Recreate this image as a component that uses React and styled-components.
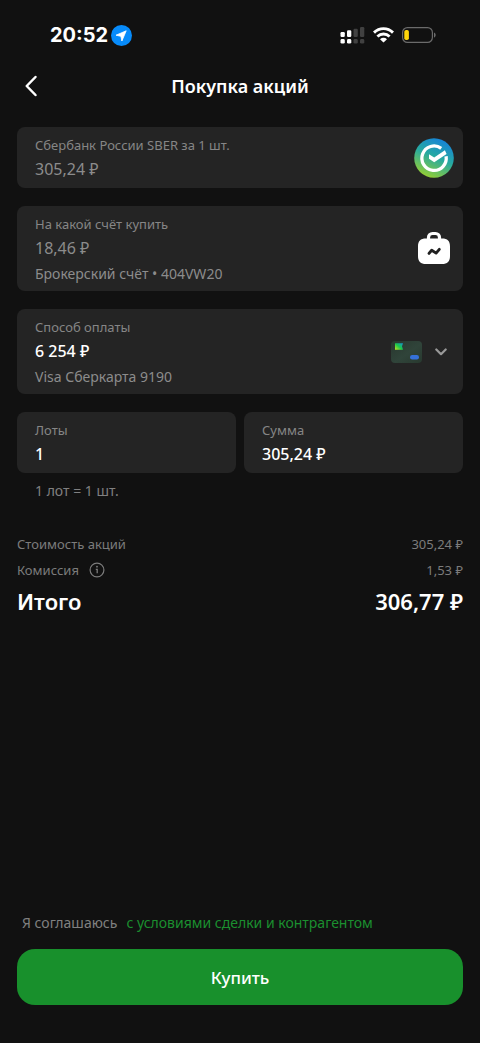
import React, { useState } from 'react';
import styled, { createGlobalStyle } from 'styled-components';

const GlobalStyle = createGlobalStyle`
  *, *::before, *::after { box-sizing: border-box; }
  body {
    margin: 0;
    background: #111111;
    color: #ffffff;
    font-family: "Noto Sans", "Liberation Sans", sans-serif;
  }
  button, input { font: inherit; color: inherit; }
`;

const Screen = styled.div`
  display: flex;
  flex-direction: column;
  min-height: 100vh;
`;

const StatusBar = styled.div`
  display: flex;
  align-items: center;
  justify-content: space-between;
  height: 70px;
  padding: 0 44px 0 50px;
`;

const StatusGroup = styled.div`
  display: flex;
  align-items: center;
  gap: ${({ $gap }) => $gap}px;
`;

const Clock = styled.time`
  font: 700 20px/24px Inter, sans-serif;
`;

const Header = styled.header`
  display: grid;
  grid-template-columns: 44px 1fr 44px;
  align-items: center;
  height: 31px;
  padding: 0 9px;
`;

const Title = styled.h1`
  margin: 0;
  font-size: 18px;
  line-height: 24px;
  font-weight: 600;
  text-align: center;
`;

const IconButton = styled.button`
  display: inline-flex;
  align-items: center;
  justify-content: center;
  padding: 0;
  border: 0;
  background: none;
  color: inherit;
  cursor: pointer;
`;

const Form = styled.form`
  display: flex;
  flex: 1;
  flex-direction: column;
  padding: 26px 17px 38px;
`;

const Fields = styled.div`
  display: flex;
  flex-direction: column;
  gap: 18px;
`;

const Card = styled.div`
  display: flex;
  align-items: center;
  justify-content: space-between;
  width: 100%;
  padding: 0 ${({ $right }) => $right || 18}px 0 18px;
  border: 0;
  border-radius: 8px;
  background: #242424;
  text-align: left;
`;

const CardText = styled.span`
  display: flex;
  flex-direction: column;
  min-width: 0;
  padding: 8px 0 5px;
`;

const Label = styled.span`
  color: #868686;
  font-size: 13px;
  line-height: 20px;
`;

const Value = styled.span`
  color: ${({ $active }) => ($active ? '#ffffff' : '#8c8c8c')};
  font-size: 16px;
  font-weight: ${({ $active }) => ($active ? 500 : 400)};
  line-height: 28px;
`;

const Detail = styled.span`
  color: #8c8c8c;
  font-size: 14px;
  line-height: 24px;
`;

const PickerIcons = styled.span`
  display: flex;
  align-items: center;
  gap: 13px;
`;

const Pair = styled.div`
  display: grid;
  grid-template-columns: 1fr 1fr;
  gap: 8px;
`;

const InputCard = styled.div`
  display: flex;
  flex-direction: column;
  min-width: 0;
  padding: 8px 18px 5px;
  border-radius: 8px;
  background: #242424;
`;

const TextInput = styled.input`
  width: 100%;
  height: 28px;
  padding: 0;
  border: 0;
  outline: 0;
  background: none;
  font-size: 16px;
  font-weight: 500;
`;

const Hint = styled.p`
  margin: 8px 18px 0;
  color: #808080;
  font-size: 14px;
  line-height: 20px;
`;

const Summary = styled.dl`
  margin: 30px 0 0;
`;

const SummaryRow = styled.div`
  display: flex;
  align-items: center;
  justify-content: space-between;
  color: ${({ $total }) => ($total ? '#ffffff' : '#7c7c7c')};
  font-size: ${({ $total }) => ($total ? 22 : 13)}px;
  font-weight: ${({ $total }) => ($total ? 600 : 400)};
  line-height: ${({ $total }) => ($total ? 36 : 26)}px;

  dt { display: flex; align-items: center; gap: 10px; }
  dd { margin: 0; }
`;

const Footer = styled.footer`
  display: flex;
  flex-direction: column;
  gap: 16px;
  margin-top: auto;
`;

const Agreement = styled.p`
  display: flex;
  flex-wrap: wrap;
  gap: 0 9px;
  margin: 0 5px;
  color: #808080;
  font-size: 14px;
  line-height: 20px;
`;

const TermsLink = styled.a`
  color: #1b8f2f;
  text-decoration: none;
`;

const BuyButton = styled.button`
  height: 56px;
  border: 0;
  border-radius: 18px;
  background: #18902c;
  font-size: 17px;
  font-weight: 500;
  cursor: pointer;
`;

const LocationIcon = () => (
  <svg width="21" height="21" viewBox="0 0 21 21" aria-hidden="true">
    <circle cx="10.5" cy="10.5" r="10.5" fill="#078bfa" />
    <path d="M15.2 5.800 10.900 16 9.900 11.300 5 10.200Z" fill="#fff" stroke="#fff" strokeWidth=".8" strokeLinejoin="round" />
  </svg>
);

const SignalIcon = () => (
  <svg width="25" height="17" viewBox="0 0 25 17" aria-hidden="true">
    <g fill="#fff">
      <rect x="0.5" y="5" width="4.3" height="5" rx="1.2" />
      <rect x="7" y="3.2" width="4.3" height="6.8" rx="1.2" />
      <rect x="0.5" y="12" width="4.3" height="4.6" rx="1.4" />
      <rect x="7" y="12" width="4.3" height="4.6" rx="1.4" />
    </g>
    <g fill="#414141">
      <rect x="13.5" y="1.8" width="4.3" height="8.2" rx="1.2" />
      <rect x="20" y="0" width="4.3" height="10" rx="1.2" />
      <rect x="13.5" y="12" width="4.3" height="4.6" rx="1.4" />
      <rect x="20" y="12" width="4.3" height="4.6" rx="1.4" />
    </g>
  </svg>
);

const WifiIcon = () => (
  <svg width="21" height="16" viewBox="0 0 21 16" aria-hidden="true">
    <g fill="none" stroke="#fff" strokeWidth="2.9">
      <path d="M1 5.600C6.400.3 14.600.3 20 5.600" />
      <path d="M4.400 9.500c3.500-3.300 8.700-3.300 12.200 0" />
    </g>
    <path d="M10.500 15.600 7 12.200c2-1.800 5-1.800 7 0Z" fill="#fff" />
  </svg>
);

const BatteryIcon = () => (
  <svg width="34" height="16" viewBox="0 0 34 16" aria-hidden="true">
    <rect x=".6" y=".6" width="29.8" height="14.8" rx="4.8" fill="none" stroke="#6b6b6b" strokeWidth="1.2" />
    <rect x="2.3" y="3" width="4.6" height="10" rx="1.8" fill="#ffd60a" />
    <path d="M32 5.400c2.200 1 2.200 4.200 0 5.200Z" fill="#6b6b6b" />
  </svg>
);

const BackIcon = () => (
  <svg width="14" height="22" viewBox="0 0 14 22" aria-hidden="true">
    <path d="M11.500 2 2.700 11l8.800 9" fill="none" stroke="#fff" strokeWidth="2.5" strokeLinecap="round" strokeLinejoin="round" />
  </svg>
);

const SberLogo = () => (
  <svg width="40" height="40" viewBox="0 0 40 40" aria-hidden="true">
    <defs>
      <linearGradient id="sber" x1="27" y1="1" x2="10" y2="39" gradientUnits="userSpaceOnUse">
        <stop offset="0" stopColor="#1684d8" />
        <stop offset=".45" stopColor="#27aaa0" />
        <stop offset="1" stopColor="#9bd02e" />
      </linearGradient>
    </defs>
    <circle cx="20" cy="20" r="19.8" fill="url(#sber)" />
    <path d="M27.2 10.300A12.200 12.200 0 1 0 32.100 18.200" fill="none" stroke="#fff" strokeWidth="3.3" />
    <path d="M15 16.300v4.500l5.200 3.400L32.600 16 30.900 12.300 20.200 19.600Z" fill="#fff" />
  </svg>
);

const BriefcaseIcon = () => (
  <svg width="34" height="36" viewBox="0 0 34 36" aria-hidden="true">
    <path d="M11.500 9V6.500a4 4 0 0 1 4-4h3a4 4 0 0 1 4 4V9" fill="none" stroke="#fff" strokeWidth="3.2" />
    <path d="M9 7.600h16c5.600 0 8 2.400 8 8v9.400c0 5.400-2.600 8-8 8H9c-5.400 0-8-2.600-8-8v-9.400c0-5.600 2.400-8 8-8Z" fill="#fff" />
    <path d="m12 22.400 2.700-3.200 4.400 2.900 3.200-3.700" fill="none" stroke="#202020" strokeWidth="2.900" strokeLinecap="round" strokeLinejoin="round" />
  </svg>
);

const CardIcon = () => (
  <svg width="31" height="22" viewBox="0 0 31 22" aria-hidden="true">
    <defs>
      <linearGradient id="plate" x1="0" y1="0" x2="1" y2="1">
        <stop offset="0" stopColor="#28372e" />
        <stop offset=".55" stopColor="#30443a" />
        <stop offset="1" stopColor="#28392f" />
      </linearGradient>
      <linearGradient id="flag" x1="0" y1="1" x2="1" y2="0">
        <stop offset="0" stopColor="#c8e51e" />
        <stop offset=".5" stopColor="#19c74c" />
        <stop offset="1" stopColor="#1790d8" />
      </linearGradient>
    </defs>
    <rect width="31" height="22" rx="4" fill="url(#plate)" />
    <path d="M4 2.200h8l-1 3 1 3.600H4Z" fill="url(#flag)" />
    <rect x="19" y="14" width="9" height="4.500" rx="2.200" fill="#3571d8" />
  </svg>
);

const ChevronIcon = () => (
  <svg width="12" height="8" viewBox="0 0 12 8" aria-hidden="true">
    <path d="m1.300 1.500 4.700 4.700 4.700-4.700" fill="none" stroke="#999" strokeWidth="2.200" strokeLinecap="round" strokeLinejoin="round" />
  </svg>
);

const InfoIcon = () => (
  <svg width="16" height="16" viewBox="0 0 16 16" aria-hidden="true">
    <circle cx="8" cy="8" r="6.900" fill="none" stroke="#7c7c7c" strokeWidth="1.200" />
    <path d="M6.800 7.300H8.200v4" fill="none" stroke="#7c7c7c" strokeWidth="1.300" />
    <circle cx="8" cy="4.700" r=".9" fill="#7c7c7c" />
  </svg>
);

function InputField({ id, label, initial, mode }) {
  const [value, setValue] = useState(initial);
  return (
    <InputCard>
      <Label as="label" htmlFor={id}>{label}</Label>
      <TextInput id={id} inputMode={mode} value={value} onChange={(e) => setValue(e.target.value)} />
    </InputCard>
  );
}

export default function App() {
  return (
    <>
      <GlobalStyle />
      <Screen>
        <StatusBar>
          <StatusGroup $gap={3}>
            <Clock>20:52</Clock>
            <LocationIcon />
          </StatusGroup>
          <StatusGroup $gap={8}>
            <SignalIcon />
            <WifiIcon />
            <BatteryIcon />
          </StatusGroup>
        </StatusBar>
        <Header>
          <IconButton type="button" aria-label="Назад"><BackIcon /></IconButton>
          <Title>Покупка акций</Title>
        </Header>
        <Form onSubmit={(e) => e.preventDefault()}>
          <Fields>
            <Card $right={9}>
              <CardText>
                <Label>Сбербанк России SBER за 1 шт.</Label>
                <Value>305,24 ₽</Value>
              </CardText>
              <SberLogo />
            </Card>
            <Card $right={12}>
              <CardText>
                <Label>На какой счёт купить</Label>
                <Value>18,46 ₽</Value>
                <Detail>Брокерский счёт • 404VW20</Detail>
              </CardText>
              <BriefcaseIcon />
            </Card>
            <Card as="button" type="button" aria-haspopup="listbox" $right={16}>
              <CardText>
                <Label>Способ оплаты</Label>
                <Value $active>6 254 ₽</Value>
                <Detail>Visa Сберкарта 9190</Detail>
              </CardText>
              <PickerIcons>
                <CardIcon />
                <ChevronIcon />
              </PickerIcons>
            </Card>
            <Pair>
              <InputField id="lots" label="Лоты" initial="1" mode="numeric" />
              <InputField id="sum" label="Сумма" initial="305,24 ₽" mode="decimal" />
            </Pair>
          </Fields>
          <Hint>1 лот = 1 шт.</Hint>
          <Summary>
            <SummaryRow>
              <dt>Стоимость акций</dt>
              <dd>305,24 ₽</dd>
            </SummaryRow>
            <SummaryRow>
              <dt>
                Комиссия
                <IconButton type="button" aria-label="О комиссии"><InfoIcon /></IconButton>
              </dt>
              <dd>1,53 ₽</dd>
            </SummaryRow>
            <SummaryRow $total>
              <dt>Итого</dt>
              <dd>306,77 ₽</dd>
            </SummaryRow>
          </Summary>
          <Footer>
            <Agreement>
              <span>Я соглашаюсь</span>
              <TermsLink href="#terms">с условиями сделки и контрагентом</TermsLink>
            </Agreement>
            <BuyButton type="submit">Купить</BuyButton>
          </Footer>
        </Form>
      </Screen>
    </>
  );
}
